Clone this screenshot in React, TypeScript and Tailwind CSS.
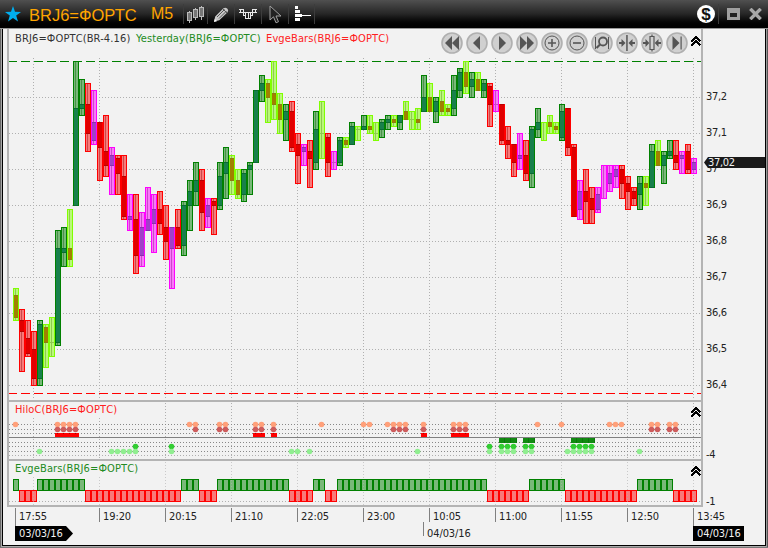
import React from 'react';

type Kind = 'd' | 'l' | 'r' | 'm';
// kind, high, low, body top, body bottom, in ticks of 0.01 below 37,30
type Bar = [Kind, number, number, number, number];

const bars: Bar[] = [
  ['l', 63, 72, 65, 71], ['r', 69, 86, 72, 75], ['r', 72, 82, 77, 81], ['r', 75, 90, 80, 88],
  ['d', 72, 90, 73, 88], ['l', 73, 85, 74, 78], ['l', 71, 82, 78, 78], ['d', 47, 79, 52, 78],
  ['d', 46, 57, 52, 53], ['l', 41, 57, 52, 55], ['d', 0, 40, 13, 40], ['d', 5, 15, 12, 13],
  ['r', 6, 25, 12, 20], ['m', 8, 23, 17, 22], ['r', 17, 33, 17, 24], ['r', 15, 32, 25, 29],
  ['m', 24, 37, 26, 29], ['r', 26, 37, 27, 31], ['r', 26, 44, 32, 43], ['m', 37, 47, 43, 44],
  ['r', 37, 59, 44, 54], ['m', 42, 57, 46, 54], ['m', 35, 47, 44, 47], ['m', 37, 53, 41, 45],
  ['r', 36, 48, 41, 45], ['r', 40, 55, 46, 50], ['m', 46, 63, 46, 52], ['r', 41, 52, 46, 51],
  ['d', 39, 54, 40, 51], ['d', 33, 47, 36, 40], ['d', 28, 40, 33, 36], ['r', 30, 47, 33, 42],
  ['m', 38, 46, 40, 43], ['r', 38, 48, 39, 40], ['d', 28, 41, 32, 40], ['d', 24, 38, 28, 31],
  ['l', 26, 37, 27, 33], ['l', 30, 38, 33, 37], ['d', 30, 39, 31, 37], ['d', 28, 37, 29, 30],
  ['d', 8, 28, 8, 28], ['d', 4, 11, 6, 8], ['l', 5, 17, 6, 10], ['l', 0, 16, 9, 12],
  ['l', 9, 20, 12, 16], ['d', 12, 22, 14, 16], ['r', 11, 25, 14, 24], ['r', 20, 34, 23, 26],
  ['m', 23, 29, 24, 25], ['r', 22, 35, 25, 27], ['d', 14, 30, 19, 28], ['l', 11, 27, 20, 20],
  ['r', 20, 32, 21, 28], ['m', 25, 30, 28, 28], ['d', 21, 29, 22, 28], ['l', 21, 24, 22, 23],
  ['d', 17, 23, 18, 23], ['l', 18, 22, 19, 19], ['d', 15, 19, 18, 19], ['l', 15, 20, 18, 19],
  ['l', 17, 22, 20, 20], ['d', 16, 21, 17, 19], ['d', 15, 19, 16, 17], ['l', 15, 18, 16, 17],
  ['d', 15, 19, 15, 17], ['l', 11, 16, 14, 16], ['l', 14, 19, 16, 16], ['l', 13, 19, 16, 17],
  ['d', 4, 14, 10, 14], ['l', 6, 14, 10, 14], ['d', 10, 17, 11, 14], ['l', 8, 15, 11, 14],
  ['l', 12, 15, 13, 14], ['d', 4, 15, 8, 13], ['d', 2, 10, 3, 8], ['l', 0, 9, 3, 7],
  ['d', 3, 10, 5, 7], ['l', 3, 8, 5, 8], ['d', 5, 10, 6, 8], ['r', 6, 18, 7, 12],
  ['m', 8, 14, 12, 12], ['r', 12, 23, 12, 22], ['r', 18, 27, 22, 23], ['r', 23, 32, 23, 28],
  ['m', 20, 30, 26, 27], ['r', 22, 33, 26, 31], ['d', 18, 35, 19, 31], ['d', 13, 21, 17, 19],
  ['l', 17, 22, 17, 17], ['l', 15, 20, 17, 18], ['l', 17, 20, 18, 19], ['d', 12, 22, 14, 21],
  ['r', 13, 26, 13, 24], ['r', 23, 43, 24, 43], ['m', 33, 44, 36, 41], ['r', 30, 45, 36, 39],
  ['r', 35, 45, 38, 41], ['m', 35, 42, 37, 41], ['m', 29, 38, 29, 29], ['m', 29, 36, 31, 34],
  ['m', 29, 35, 30, 32], ['r', 29, 38, 30, 34], ['r', 32, 41, 34, 36], ['r', 35, 40, 36, 38],
  ['d', 32, 41, 34, 37], ['l', 32, 40, 34, 35], ['d', 23, 35, 25, 35], ['l', 22, 29, 25, 29],
  ['d', 25, 34, 26, 29], ['d', 22, 27, 25, 26], ['r', 22, 30, 26, 28], ['m', 25, 31, 26, 27],
  ['r', 23, 31, 25, 30], ['m', 27, 31, 28, 30],
];

const palette: Record<Kind, { edge: string; fill: string; mid: string; body: string; bodyEdge: string }> = {
  d: { edge: '#008000', fill: '#79b979', mid: '#4a914a', body: '#18804c', bodyEdge: '#0a6a35' },
  l: { edge: '#80ff00', fill: '#b9f879', mid: '#8fc950', body: '#a08000', bodyEdge: '#8f7a10' },
  r: { edge: '#ff0000', fill: '#f87979', mid: '#c94a4a', body: '#e00000', bodyEdge: '#b80000' },
  m: { edge: '#ff00ff', fill: '#f879f8', mid: '#c94ac9', body: '#a040c8', bodyEdge: '#8a2fae' },
};

const gridX = [33, 99, 165, 231, 297, 363, 429, 495, 561, 627, 693];
const prices = ['37,2', '37,1', '37', '36,9', '36,8', '36,7', '36,6', '36,5', '36,4'];
const times = ['19:20', '20:15', '21:10', '22:05', '23:00', '10:05', '11:00', '11:55', '12:50'];

const orange = [0, 7, 8, 9, 10, 29, 30, 34, 35, 40, 41, 43, 51, 58, 59, 62, 63, 64, 65, 68, 73, 74, 75, 87, 91, 99, 100, 101, 106, 107, 109, 110];
const crimson = [7, 8, 9, 10, 30, 34, 35, 40, 41, 43, 63, 64, 65, 68, 73, 74, 75, 106, 107, 109, 110];
const redBlocks = [7, 8, 9, 10, 40, 41, 43, 68, 73, 74, 75];
const greenBlocks = [81, 82, 83, 85, 86, 93, 94, 95, 96];
const limeDots = [20, 26, 79, 81, 82, 83, 85, 86, 93, 94, 95, 96];
const paleDots = [4, 16, 17, 18, 19, 20, 26, 46, 47, 49, 67, 79, 81, 82, 83, 85, 86, 92, 93, 94, 95, 96, 104];
const upRuns = [[0, 0], [4, 11], [28, 30], [34, 45], [50, 51], [54, 78], [86, 91], [104, 109]];

const barX = (i: number) => 13 + 6 * i;
const tickY = (t: number) => Math.round(61 + t * 3.6);

function GridV({ from, to }: { from: number; to: number }) {
  return (
    <>
      {gridX.map((x) => (
        <line key={x} x1={x + 0.5} x2={x + 0.5} y1={from} y2={to} stroke="#b0b0b0" strokeDasharray="1 2" />
      ))}
    </>
  );
}

function Candle({ i, bar }: { i: number; bar: Bar }) {
  const [kind, hi, lo, bt, bb] = bar;
  const c = palette[kind];
  const x = barX(i);
  const top = tickY(hi);
  const bottom = tickY(lo);
  const b0 = tickY(bt);
  const b1 = tickY(bb);
  return (
    <g>
      <rect x={x + 0.5} y={top + 0.5} width={5} height={bottom - top} fill={c.fill} stroke={c.edge} />
      <rect x={x + 2} y={top + 1} width={1} height={bottom - top - 1} fill={c.mid} />
      {bt === bb && bt !== hi && <rect x={x + 1} y={b0} width={4} height={1} fill={c.mid} />}
      {bt !== bb && (
        <>
          <rect x={x + 1} y={b0} width={4} height={b1 - b0 + 1} fill={c.body} />
          <rect x={x + 1} y={b0} width={4} height={1} fill={c.bodyEdge} />
          <rect x={x + 1} y={b1} width={4} height={1} fill={c.bodyEdge} />
        </>
      )}
    </g>
  );
}

function Dots({ items, y, color }: { items: number[]; y: number; color: string }) {
  return (
    <>
      {items.map((i) => (
        <circle key={i} cx={barX(i) + 2.5} cy={y} r={2.8} fill={color} />
      ))}
    </>
  );
}

function Chevrons() {
  return (
    <svg width="10" height="10" viewBox="0 0 10 10" fill="none" stroke="#000" strokeWidth="2" shapeRendering="crispEdges">
      <path d="M0.5 5.5 L5 1.2 L9.5 5.5 M0.5 9.5 L5 5.2 L9.5 9.5" />
    </svg>
  );
}

const navIcons: React.ReactNode[] = [
  <path d="M4 11l7-7v14zM11 11l7-7v14z" />,
  <path d="M7 11l7-7v14z" />,
  <path d="M15 11l-7-7v14z" />,
  <path d="M11 11l-7-7v14zM18 11l-7-7v14z" />,
  <g fill="none" stroke="#555"><circle cx="11" cy="11" r="7" /><path d="M7 11h8M11 7v8" strokeWidth="1.6" /></g>,
  <g fill="none" stroke="#555"><circle cx="11" cy="11" r="7" /><path d="M7 11h8" strokeWidth="1.6" /></g>,
  <g fill="none" stroke="#555"><path d="M4.5 5v12M17.5 5v12" /><circle cx="12" cy="9.5" r="4" strokeWidth="1.8" /><path d="M9 12.5L5.5 16" strokeWidth="2.2" /></g>,
  <g><path d="M10.2 3h1.5v16h-1.5zM3 10h2.500v-3l4 4-4 4v-3h-2.500zM19 10h-2.500v-3l-4 4 4 4v-3h2.500z" /></g>,
  <g><path d="M2 10h2.500v-3l3.800 4-3.800 4v-3h-2.500zM20 10h-2.500v-3l-3.800 4 3.800 4v-3h2.500z" /><path d="M9 4.5h4v13h-4zM11 2.5v2M11 17.5v2" fill="none" stroke="#555" strokeWidth="1.2" /></g>,
  <g><path d="M13.5 11l-7-7v14z" /><path d="M14.5 4.5h1.2v13h-1.2z" /></g>,
];

function TitleBar() {
  return (
    <header className="flex h-7 shrink-0 items-center bg-linear-to-b from-[#505050] via-[#262626] to-black pl-[5px]">
      <svg width="16" height="16" viewBox="0 0 16 16" fill="#00aeef">
        <path d="M8 0l2 5.8 6 .1-4.8 3.7L13 15.6 8 12.1 3 15.6l1.8-6L0 5.9l6-.1z" />
      </svg>
      <span className="ml-2 w-[122px] pt-[2px] text-[16.5px] leading-7 text-[#ffa500]">BRJ6=ФОРТС</span>
      <span className="w-[32px] text-[16px] leading-7 text-[#ffa500]">M5</span>
      <div className="flex items-center">
        <div className="flex h-5 w-6 items-center justify-center border-l border-[#3c3c3c]">
          <svg width="18" height="18" viewBox="0 0 18 18" fill="#777" stroke="#bbb" shapeRendering="crispEdges">
            <path d="M2.5 5.5v12M8.5 2.5v12M14.5 .5v14" />
            <path d="M.5 7.5h4v8h-4zM6.5 4.5h4v8h-4zM12.5 2.5h4v9h-4z" />
          </svg>
        </div>
        <div className="flex h-5 w-[27px] items-center justify-center border-l border-[#3c3c3c]">
          <svg width="15" height="15" viewBox="0 0 15 15">
            <path d="M0 14.5l1.2-5L9.5 1.2Q11.5 0 13.2 1.6 15 3.2 13.6 5.2L5.3 13.3z" fill="#c8c8c8" />
            <path d="M3 10l7.5-7.5M5 11.5l7.5-7.5M9 2l4 4" stroke="#555" fill="none" />
            <path d="M0 15l.8-3L3 14.2z" fill="#fff" />
          </svg>
        </div>
        <div className="flex h-5 w-[27px] items-center justify-center border-l border-[#3c3c3c]">
          <svg width="18" height="12" viewBox="0 0 18 12" fill="none" stroke="#e8e8e8" shapeRendering="crispEdges">
            <path d="M0 4.5h18M1.5 4v-3h3v4M13.5 4v-3h3v3M4.5 4.500v3h2v3h5v-3h2v-3M6.500 4.500v3M9 4.500v6M11.500 4.500v3" />
            <path d="M0 1.500h2M16 1.500h2" />
          </svg>
        </div>
        <div className="flex h-5 w-[27px] items-center justify-center border-l border-[#3c3c3c]">
          <svg width="13" height="19" viewBox="0 0 13 19" fill="#222" stroke="#a0a0a0">
            <path d="M1 1v14l3.500-3.200 2.500 6 2.500-1.100-2.500-5.700h5z" />
          </svg>
        </div>
        <div className="flex h-5 w-[27px] items-center border-x border-[#3c3c3c] pl-[6px]">
          <svg width="17" height="16" viewBox="0 0 17 16" fill="#fff" shapeRendering="crispEdges">
            <path d="M0 0h3v3H0zM0 4h5v3H0zM0 9h16v1H0zM0 8h7v3H0zM0 12h5v3H0z" />
          </svg>
        </div>
      </div>
      <div className="ml-auto flex items-center pr-[6px]">
        <span className="flex size-[18px] items-center justify-center rounded-full bg-white text-[17px] leading-none font-bold text-[#111]">$</span>
        <div className="ml-[3px] h-5 border-l border-[#3c3c3c]" />
        <svg className="ml-2" width="13" height="12" viewBox="0 0 13 12" shapeRendering="crispEdges">
          <path d="M0 0h13v12H0z" fill="#a0a0a0" />
          <path d="M3 5h7v4H3z" fill="#222" />
        </svg>
        <svg className="ml-[9px]" width="13" height="12" viewBox="0 0 13 12" stroke="#a8a8a8" strokeWidth="3.400">
          <path d="M1.300 .8L11.700 11.200M11.700 .8L1.300 11.200" />
        </svg>
      </div>
    </header>
  );
}

function PricePane() {
  return (
    <section className="relative h-[371px]">
      <svg className="block" width="692" height="371" viewBox="9 29 692 371" shapeRendering="crispEdges">
        <GridV from={58} to={400} />
        {prices.map((p, k) => (
          <line key={p} x1={9} x2={701} y1={97.5 + 36 * k} y2={97.5 + 36 * k} stroke="#b0b0b0" strokeDasharray="1 2" />
        ))}
        <line x1={8} x2={701} y1={61.5} y2={61.5} stroke="#008000" strokeDasharray="9 4" />
        <line x1={8} x2={701} y1={393.5} y2={393.5} stroke="#f00" strokeDasharray="9 4" />
        {bars.map((b, i) => <Candle key={i} i={i} bar={b} />)}
      </svg>
      <div className="absolute inset-x-0 top-0 flex items-start pl-[6px]">
        <div className="flex pt-[2px] leading-4 tracking-[0.13px]">
          <span className="w-[121px] text-[#333]">BRJ6=ФОРТС(BR-4.16)</span>
          <span className="w-[130px] text-[#228b22]">Yesterday(BRJ6=ФОРТС)</span>
          <span className="text-[#ff2020]">EvgeBars(BRJ6=ФОРТС)</span>
        </div>
        <div className="ml-auto flex gap-[3px] pt-[3px] pr-[3.500px]">
          {navIcons.map((icon, k) => (
            <svg key={k} width="22" height="22" viewBox="0 0 22 22" fill="#555">
              <circle cx="11" cy="11" r="10" fill="#d0d0d0" stroke="#b0b0b0" strokeWidth="1.600" />
              {icon}
            </svg>
          ))}
        </div>
        <div className="pt-[7px]"><Chevrons /></div>
      </div>
    </section>
  );
}

function HiloPane() {
  return (
    <section className="relative h-[57px]">
      <svg className="block" width="692" height="57" viewBox="9 402 692 57">
        <g shapeRendering="crispEdges">
          <GridV from={403} to={459} />
          {[424, 429, 433, 442, 446, 451].map((y) => (
            <line key={y} x1={9} x2={701} y1={y + 0.5} y2={y + 0.5} stroke="#888" strokeDasharray="1 2" />
          ))}
          <line x1={9} x2={701} y1={455.5} y2={455.5} stroke="#b0b0b0" strokeDasharray="1 2" />
          {redBlocks.map((i) => <rect key={i} x={barX(i)} y={433} width={6} height={4} fill="#f00" />)}
          {redBlocks.map((i) => <rect key={i} x={barX(i) + 2} y={433} width={1} height={1} fill="#a00" />)}
          {greenBlocks.map((i) => <rect key={i} x={barX(i)} y={438} width={6} height={5} fill="#128a12" />)}
          {greenBlocks.map((i) => <rect key={i} x={barX(i) + 5} y={438} width={1} height={5} fill="#0b780b" />)}
          <rect x={9} y={437} width={692} height={1} fill="#808080" />
        </g>
        <Dots items={orange} y={424.5} color="#ffa07a" />
        <Dots items={crimson} y={429.5} color="#cd5c5c" />
        <Dots items={limeDots} y={446.5} color="#32cd32" />
        <Dots items={paleDots} y={451.5} color="#90ee90" />
      </svg>
      <div className="absolute inset-x-0 top-0 flex justify-between pl-[6px]">
        <span className="bg-[#f2f2f2] leading-4 tracking-[0.13px] text-[#ff2020]">HiloC(BRJ6=ФОРТС)</span>
        <div className="pt-[5px]"><Chevrons /></div>
      </div>
    </section>
  );
}

function EvgePane() {
  return (
    <section className="relative h-[44px]">
      <svg className="block" width="692" height="44" viewBox="9 461 692 44" shapeRendering="crispEdges">
        <line x1={9} x2={701} y1={501.5} y2={501.5} stroke="#b0b0b0" strokeDasharray="1 2" />
        {bars.map((_, i) => {
          const up = upRuns.some(([a, b]) => i >= a && i <= b);
          return (
            <rect
              key={i}
              x={barX(i) + 0.5}
              y={up ? 479.5 : 490.5}
              width={5}
              height={11}
              fill={up ? '#79b979' : '#f87979'}
              stroke={up ? '#008000' : '#f00'}
            />
          );
        })}
        <g opacity={0.6}><GridV from={462} to={505} /></g>
      </svg>
      <div className="absolute inset-x-0 top-0 flex justify-between pl-[6px]">
        <span className="bg-[#f2f2f2] leading-4 tracking-[0.13px] text-[#228b22]">EvgeBars(BRJ6=ФОРТС)</span>
        <div className="pt-[5px]"><Chevrons /></div>
      </div>
    </section>
  );
}

function PriceAxis() {
  return (
    <aside className="relative w-[62px] shrink-0 pl-[3px] tracking-[-0.3px] text-[#222]">
      <div className="h-[408px] pt-[50px]">
        {prices.map((p) => <div key={p} className="h-9 leading-9">{p}</div>)}
      </div>
      <div className="h-[46px] pt-[10px] leading-4">-4</div>
      <div className="pt-[11px] leading-4">-1</div>
      <div className="absolute top-[128px] left-px flex h-[11px] w-[61px] items-center">
        <svg width="4" height="11" viewBox="0 0 4 11" fill="#1a1a1a"><path d="M4 0v11L0 5.500z" /></svg>
        <span className="h-[11px] flex-1 bg-[#1a1a1a] leading-[11px] text-[#f2f2f2]">37,02</span>
      </div>
    </aside>
  );
}

function TimeAxis() {
  return (
    <footer className="flex-1 pt-px pl-[12px] tracking-[-0.1px] text-[#222]">
      <div className="flex h-[18px] leading-[18px]">
        <div className="w-[84px] border-l border-[#808080] pl-[3px]">17:55</div>
        {times.map((t) => (
          <div key={t} className="h-[14px] w-[66px] border-l border-[#808080] pl-[3px]">{t}</div>
        ))}
        <div className="border-l border-[#808080] pl-[3px]">13:45</div>
      </div>
      <div className="flex h-[15px] leading-[15px]">
        <span className="h-[15px] w-[51px] bg-black pl-1 text-[#f2f2f2]">03/03/16</span>
        <svg width="7" height="15" viewBox="0 0 7 15"><path d="M0 0L7 7.500 0 15z" /></svg>
        <span className="-mt-1 ml-[350px] h-[14px] w-[270px] border-l border-[#808080] pt-1 pl-[3px]">04/03/16</span>
        <span className="h-[15px] w-[51px] bg-black pl-1 text-[#f2f2f2]">04/03/16</span>
      </div>
    </footer>
  );
}

export default function App() {
  return (
    <div className="flex h-[548px] w-[768px] flex-col overflow-hidden bg-[#f2f2f2] font-['Liberation_Sans',sans-serif]">
      <TitleBar />
      <div className="h-px shrink-0 bg-[#999]" />
      <div className="flex flex-1 border-b border-[#777]">
        <div className="w-px bg-[#666]" />
        <div className="w-px bg-[#aaa]" />
        <div className="flex flex-1 flex-col border-b border-[#aaa]">
          <div className="flex flex-1 flex-col border-x border-b border-black font-['DejaVu_Sans_Condensed','DejaVu_Sans',sans-serif] text-[11px] whitespace-nowrap">
            <div className="flex h-[478px] pl-1">
              <main className="w-[696px] border-x-2 border-[#b4b4b4]">
                <PricePane />
                <div className="h-[2px] bg-[#b4b4b4]" />
                <HiloPane />
                <div className="h-[2px] bg-[#b4b4b4]" />
                <EvgePane />
                <div className="h-[2px] bg-[#b4b4b4]" />
              </main>
              <PriceAxis />
            </div>
            <TimeAxis />
          </div>
        </div>
        <div className="w-px bg-[#999]" />
        <div className="w-px bg-[#555]" />
      </div>
    </div>
  );
}
